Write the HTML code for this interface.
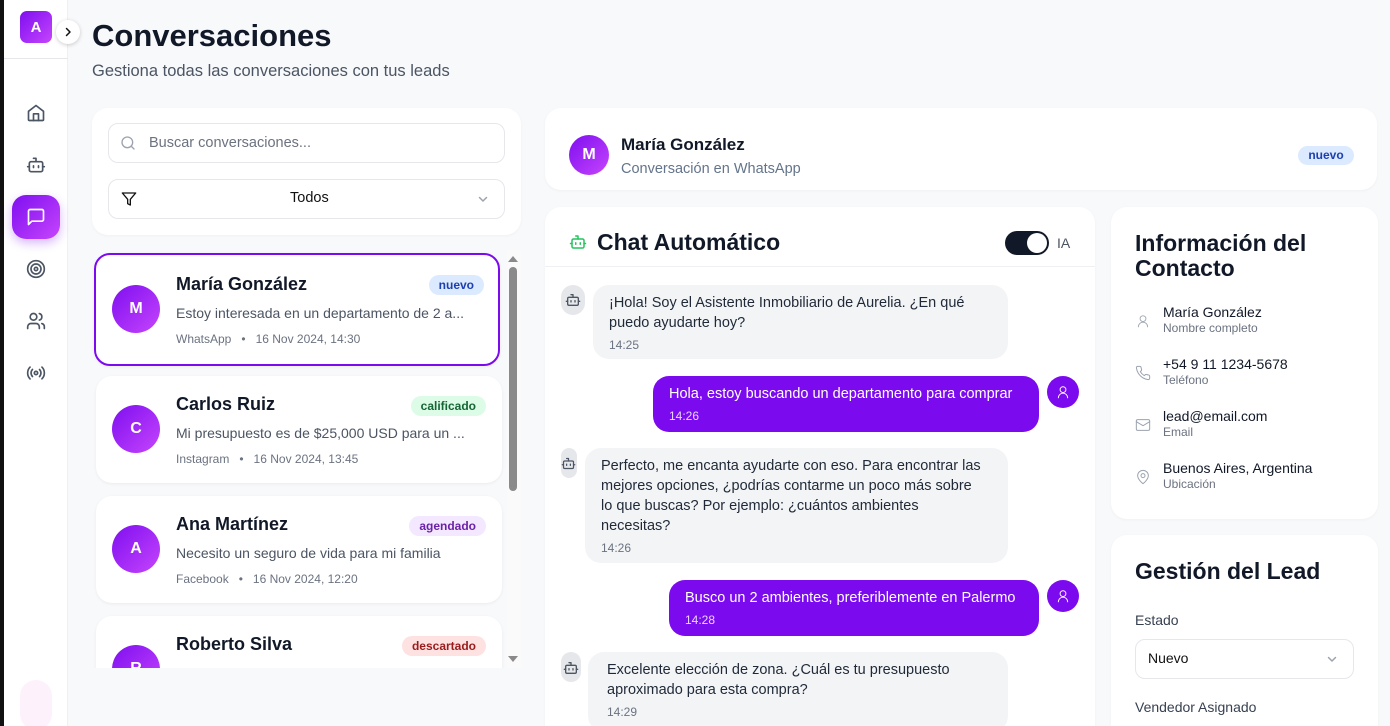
<!DOCTYPE html>
<html><head><meta charset="utf-8">
<style>
*{box-sizing:border-box;margin:0;padding:0}
html,body{width:1390px;height:726px;overflow:hidden}
body{background:#f8f9fb;font-family:"Liberation Sans",sans-serif;color:#111827;position:relative}
.abs{position:absolute}
.card{position:absolute;background:#fff;border-radius:16px;box-shadow:0 1px 3px rgba(0,0,0,.04)}
.grad{background:linear-gradient(135deg,#7e0ff0,#c644fc)}
.ico{position:absolute;fill:none;stroke:#4b5563;stroke-width:2;stroke-linecap:round;stroke-linejoin:round}
.item{position:absolute;left:96px;width:406px;background:#fff;border-radius:16px;box-shadow:0 1px 3px rgba(0,0,0,.06)}
.av{position:absolute;left:16px;width:48px;height:48px;border-radius:50%;color:#fff;font-weight:bold;font-size:16px;display:flex;align-items:center;justify-content:center}
.nm{position:absolute;left:80px;font-size:18px;font-weight:bold;color:#111827}
.pv{position:absolute;left:80px;font-size:14px;color:#4b5563;white-space:nowrap}
.mt{position:absolute;left:80px;font-size:12px;color:#6b7280;white-space:nowrap}
.bd{position:absolute;right:16px;height:20px;border-radius:10px;font-size:12px;font-weight:bold;padding:0 10px;line-height:20px}
.bub{position:absolute;border-radius:16px;font-size:14px;line-height:20px;padding:8px 16px}
.bot{background:#f3f4f6;color:#1f2937}
.usr{background:#7c0aef;color:#fff}
.tm{font-size:12px;color:#6b7280;margin-top:2px}
.usr .tm{color:#e9d5ff}
.bi{position:absolute;left:561px;width:24px;height:30px;border-radius:12px;background:#e5e7eb}
.ua{position:absolute;left:1047px;width:32px;height:32px;border-radius:50%;background:#7c0aef}
.row{position:absolute;left:1135px}
.row b{display:block;font-weight:normal;font-size:14px;color:#111827}
.row span{display:block;font-size:12px;color:#6b7280;margin-top:1px}
</style></head><body>
<div class="abs" style="left:0;top:0;width:4px;height:726px;background:#111"></div>
<div class="abs" style="left:4px;top:0;width:64px;height:726px;background:#fff;border-right:1px solid #eef0f3"></div>
<div class="abs grad" style="left:20px;top:11px;width:32px;height:32px;border-radius:7px;color:#fff;font-weight:bold;font-size:15px;display:flex;align-items:center;justify-content:center">A</div>
<div class="abs" style="left:56px;top:20px;width:24px;height:24px;border-radius:50%;background:#fff;box-shadow:0 1px 4px rgba(0,0,0,.2)"></div>
<svg class="ico" style="left:62px;top:26px;stroke:#111;stroke-width:1.5" width="12" height="12" viewBox="0 0 12 12"><path d="M4.5 2.5 8 6 4.5 9.5"/></svg>
<div class="abs" style="left:4px;top:58px;width:64px;height:1px;background:#e5e7eb"></div>
<svg class="ico" style="left:26px;top:103px" width="20" height="20" viewBox="0 0 24 24"><path d="M3 10 12 3l9 7v10a1 1 0 0 1-1 1H4a1 1 0 0 1-1-1z"/><path d="M9 21v-8h6v8"/></svg>
<svg class="ico" style="left:26px;top:155px" width="20" height="20" viewBox="0 0 24 24"><rect x="4" y="8" width="16" height="12" rx="2"/><path d="M12 8V4H9M2 14h2M20 14h2M9 13v2M15 13v2"/></svg>
<div class="abs grad" style="left:12px;top:195px;width:48px;height:44px;border-radius:14px;box-shadow:0 4px 10px rgba(126,15,240,.3)"></div>
<svg class="ico" style="left:26px;top:207px;stroke:#fff" width="20" height="20" viewBox="0 0 24 24"><path d="M21 15a2 2 0 0 1-2 2H7l-4 4V5a2 2 0 0 1 2-2h14a2 2 0 0 1 2 2z"/></svg>
<svg class="ico" style="left:26px;top:259px" width="20" height="20" viewBox="0 0 24 24"><circle cx="12" cy="12" r="10"/><circle cx="12" cy="12" r="6"/><circle cx="12" cy="12" r="2"/></svg>
<svg class="ico" style="left:26px;top:311px" width="20" height="20" viewBox="0 0 24 24"><path d="M16 21v-2a4 4 0 0 0-4-4H6a4 4 0 0 0-4 4v2"/><circle cx="9" cy="7" r="4"/><path d="M22 21v-2a4 4 0 0 0-3-3.87M16 3.13a4 4 0 0 1 0 7.75"/></svg>
<svg class="ico" style="left:26px;top:363px" width="20" height="20" viewBox="0 0 24 24"><path d="M4.9 19.1C1 15.2 1 8.8 4.9 4.9M7.8 16.2c-2.3-2.3-2.3-6.1 0-8.5M16.2 7.8c2.3 2.3 2.3 6.1 0 8.5M19.1 4.9C23 8.8 23 15.1 19.1 19"/><circle cx="12" cy="12" r="2"/></svg>
<div class="abs" style="left:20px;top:680px;width:32px;height:50px;border-radius:16px;background:#fdf2fb"></div>

<div class="abs" style="left:92px;top:18px;font-size:31px;font-weight:bold;color:#111827">Conversaciones</div>
<div class="abs" style="left:92px;top:62px;font-size:16.5px;color:#4b5563">Gestiona todas las conversaciones con tus leads</div>

<div class="card" style="left:92px;top:108px;width:429px;height:127px"></div>
<div class="abs" style="left:108px;top:123px;width:397px;height:40px;border:1px solid #e5e7eb;border-radius:10px"></div>
<svg class="ico" style="left:120px;top:135px;stroke:#9ca3af" width="16" height="16" viewBox="0 0 24 24"><circle cx="11" cy="11" r="8"/><path d="m21 21-4.3-4.3"/></svg>
<div class="abs" style="left:149px;top:135px;font-size:14.5px;color:#6b7280">Buscar conversaciones...</div>
<div class="abs" style="left:108px;top:179px;width:397px;height:40px;border:1px solid #e5e7eb;border-radius:10px"></div>
<svg class="ico" style="left:121px;top:191px;stroke:#111" width="16" height="16" viewBox="0 0 24 24"><path d="M22 3H2l8 9.46V19l4 2v-8.54z"/></svg>
<div class="abs" style="left:290px;top:190px;font-size:14.5px;color:#111">Todos</div>
<svg class="ico" style="left:477px;top:193px;stroke:#9ca3af;stroke-width:1.5" width="12" height="12" viewBox="0 0 12 12"><path d="m2.5 4.5 3.5 3.5 3.5-3.5"/></svg>

<div class="abs" style="left:92px;top:250px;width:429px;height:418px;overflow:hidden">
 <div class="item" style="left:2px;top:3px;height:113px;border:2px solid #7c0aef">
  <div class="av grad" style="top:30px;left:16px">M</div>
  <div class="nm" style="top:19px;left:80px">María González</div>
  <div class="bd" style="top:20px;right:14px;background:#dbeafe;color:#1e40af">nuevo</div>
  <div class="pv" style="top:50px;left:80px">Estoy interesada en un departamento de 2 a...</div>
  <div class="mt" style="top:77px;left:80px">WhatsApp &nbsp;&nbsp;•&nbsp;&nbsp; 16 Nov 2024, 14:30</div>
 </div>
 <div class="item" style="left:4px;top:126px;height:107px">
  <div class="av grad" style="top:29px">C</div>
  <div class="nm" style="top:18px">Carlos Ruiz</div>
  <div class="bd" style="top:20px;background:#dcfce7;color:#166534">calificado</div>
  <div class="pv" style="top:49px">Mi presupuesto es de $25,000 USD para un ...</div>
  <div class="mt" style="top:76px">Instagram &nbsp;&nbsp;•&nbsp;&nbsp; 16 Nov 2024, 13:45</div>
 </div>
 <div class="item" style="left:4px;top:246px;height:107px">
  <div class="av grad" style="top:29px">A</div>
  <div class="nm" style="top:18px">Ana Martínez</div>
  <div class="bd" style="top:20px;background:#f3e8ff;color:#6b21a8">agendado</div>
  <div class="pv" style="top:49px">Necesito un seguro de vida para mi familia</div>
  <div class="mt" style="top:76px">Facebook &nbsp;&nbsp;•&nbsp;&nbsp; 16 Nov 2024, 12:20</div>
 </div>
 <div class="item" style="left:4px;top:366px;height:107px">
  <div class="av grad" style="top:29px">R</div>
  <div class="nm" style="top:18px">Roberto Silva</div>
  <div class="bd" style="top:20px;background:#fee2e2;color:#991b1b">descartado</div>
  <div class="pv" style="top:49px;color:#9ca3af">Quiero información sobre seguros de auto...</div>
 </div>
 <div class="abs" style="left:415px;top:0;width:16px;height:418px;background:#fafafa"></div>
 <div class="abs" style="left:417px;top:17px;width:8px;height:224px;background:#8a8a8a;border-radius:4px"></div>
 <div class="abs" style="left:416px;top:6px;border:5px solid transparent;border-bottom:6px solid #8a8a8a;border-top:0"></div>
 <div class="abs" style="left:416px;top:406px;border:5px solid transparent;border-top:6px solid #8a8a8a;border-bottom:0"></div>
</div>

<div class="card" style="left:545px;top:108px;width:832px;height:82px"></div>
<div class="abs grad" style="left:569px;top:135px;width:40px;height:40px;border-radius:50%;color:#fff;font-weight:bold;font-size:16px;display:flex;align-items:center;justify-content:center">M</div>
<div class="abs" style="left:621px;top:135px;font-size:17px;font-weight:bold">María González</div>
<div class="abs" style="left:621px;top:161px;font-size:14.5px;color:#64748b">Conversación en WhatsApp</div>
<div class="abs" style="left:1298px;top:146px;width:56px;text-align:center;height:19px;border-radius:10px;background:#dbeafe;color:#1e40af;font-size:12px;font-weight:bold;line-height:19px">nuevo</div>

<div class="card" style="left:545px;top:207px;width:550px;height:540px"></div>
<div class="abs" style="left:545px;top:266px;width:550px;height:1px;background:#eef0f3"></div>
<svg class="ico" style="left:569px;top:233px;stroke:#22c55e" width="18" height="18" viewBox="0 0 24 24"><rect x="4" y="8" width="16" height="12" rx="2"/><path d="M12 8V4H9M2 14h2M20 14h2M9 13v2M15 13v2"/></svg>
<div class="abs" style="left:597px;top:229px;font-size:23px;font-weight:bold">Chat Automático</div>
<div class="abs" style="left:1005px;top:231px;width:44px;height:24px;border-radius:12px;background:#111827"></div>
<div class="abs" style="left:1027px;top:233px;width:20px;height:20px;border-radius:50%;background:#fff"></div>
<div class="abs" style="left:1057px;top:235px;font-size:14px;color:#4b5563">IA</div>

<div class="bi" style="top:285px"></div>
<svg class="ico" style="left:565px;top:292px;stroke:#4b5563" width="16" height="16" viewBox="0 0 24 24"><rect x="4" y="8" width="16" height="12" rx="2"/><path d="M12 8V4H9M2 14h2M20 14h2M9 13v2M15 13v2"/></svg>
<div class="bub bot" style="left:593px;top:285px;width:415px;height:74px;font-size:14.5px">¡Hola! Soy el Asistente Inmobiliario de Aurelia. ¿En qué puedo ayudarte hoy?<div class="tm">14:25</div></div>

<div class="bub usr" style="left:653px;top:376px;width:386px;height:56px;font-size:14.5px">Hola, estoy buscando un departamento para comprar<div class="tm">14:26</div></div>
<div class="ua" style="top:376px"></div>
<svg class="ico" style="left:1056px;top:385px;stroke:#fff;stroke-width:1.6" width="14" height="14" viewBox="0 0 24 24"><circle cx="12" cy="8" r="5"/><path d="M4 22a8 8 0 0 1 16 0"/></svg>

<div class="bi" style="top:448px;width:16px"></div>
<svg class="ico" style="left:561px;top:456px;stroke:#4b5563" width="15" height="15" viewBox="0 0 24 24"><rect x="4" y="8" width="16" height="12" rx="2"/><path d="M12 8V4H9M2 14h2M20 14h2M9 13v2M15 13v2"/></svg>
<div class="bub bot" style="left:585px;top:448px;width:423px;height:115px;font-size:14.5px;white-space:nowrap">Perfecto, me encanta ayudarte con eso. Para encontrar las<br>mejores opciones, ¿podrías contarme un poco más sobre<br>lo que buscas? Por ejemplo: ¿cuántos ambientes<br>necesitas?<div class="tm">14:26</div></div>

<div class="bub usr" style="left:669px;top:580px;width:370px;height:56px;font-size:14.5px">Busco un 2 ambientes, preferiblemente en Palermo<div class="tm">14:28</div></div>
<div class="ua" style="top:580px"></div>
<svg class="ico" style="left:1056px;top:589px;stroke:#fff;stroke-width:1.6" width="14" height="14" viewBox="0 0 24 24"><circle cx="12" cy="8" r="5"/><path d="M4 22a8 8 0 0 1 16 0"/></svg>

<div class="bi" style="top:652px;width:20px"></div>
<svg class="ico" style="left:563px;top:660px;stroke:#4b5563" width="16" height="16" viewBox="0 0 24 24"><rect x="4" y="8" width="16" height="12" rx="2"/><path d="M12 8V4H9M2 14h2M20 14h2M9 13v2M15 13v2"/></svg>
<div class="bub bot" style="left:588px;top:652px;width:420px;height:80px;padding-left:19px;font-size:14.5px">Excelente elección de zona. ¿Cuál es tu presupuesto aproximado para esta compra?<div class="tm">14:29</div></div>

<div class="card" style="left:1111px;top:207px;width:267px;height:312px"></div>
<div class="abs" style="left:1135px;top:231px;font-size:23px;font-weight:bold;line-height:25px">Información del<br>Contacto</div>
<svg class="ico" style="left:1136px;top:314px;stroke:#9ca3af;stroke-width:1.5" width="14" height="14" viewBox="0 0 24 24"><circle cx="12" cy="8" r="5"/><path d="M4 22a8 8 0 0 1 16 0"/></svg>
<div class="row" style="left:1163px;top:304px"><b>María González</b><span>Nombre completo</span></div>
<svg class="ico" style="left:1135px;top:365px;stroke:#9ca3af;stroke-width:1.5" width="16" height="16" viewBox="0 0 24 24"><path d="M22 16.9v3a2 2 0 0 1-2.2 2 19.8 19.8 0 0 1-8.6-3.1 19.5 19.5 0 0 1-6-6A19.8 19.8 0 0 1 2.1 4.2 2 2 0 0 1 4.1 2h3a2 2 0 0 1 2 1.7c.1 1 .4 1.9.7 2.8a2 2 0 0 1-.5 2.1L8 9.9a16 16 0 0 0 6 6l1.3-1.3a2 2 0 0 1 2.1-.4c.9.3 1.8.6 2.8.7a2 2 0 0 1 1.7 2z"/></svg>
<div class="row" style="left:1163px;top:356px"><b>+54 9 11 1234-5678</b><span>Teléfono</span></div>
<svg class="ico" style="left:1135px;top:417px;stroke:#9ca3af;stroke-width:1.5" width="16" height="16" viewBox="0 0 24 24"><rect x="2" y="4" width="20" height="16" rx="2"/><path d="m22 7-10 6L2 7"/></svg>
<div class="row" style="left:1163px;top:408px"><b>lead@email.com</b><span>Email</span></div>
<svg class="ico" style="left:1135px;top:469px;stroke:#9ca3af;stroke-width:1.5" width="16" height="16" viewBox="0 0 24 24"><path d="M20 10c0 6-8 12-8 12s-8-6-8-12a8 8 0 0 1 16 0z"/><circle cx="12" cy="10" r="3"/></svg>
<div class="row" style="left:1163px;top:460px"><b>Buenos Aires, Argentina</b><span>Ubicación</span></div>

<div class="card" style="left:1111px;top:535px;width:267px;height:220px"></div>
<div class="abs" style="left:1135px;top:558px;font-size:23px;font-weight:bold">Gestión del Lead</div>
<div class="abs" style="left:1135px;top:612px;font-size:14px;color:#374151">Estado</div>
<div class="abs" style="left:1135px;top:639px;width:219px;height:40px;border:1px solid #e5e7eb;border-radius:10px"></div>
<div class="abs" style="left:1148px;top:650px;font-size:14px;color:#111">Nuevo</div>
<svg class="ico" style="left:1326px;top:653px;stroke:#9ca3af;stroke-width:1.5" width="12" height="12" viewBox="0 0 12 12"><path d="m2.5 4.5 3.5 3.5 3.5-3.5"/></svg>
<div class="abs" style="left:1135px;top:699px;font-size:14px;color:#374151">Vendedor Asignado</div>
</body></html>
